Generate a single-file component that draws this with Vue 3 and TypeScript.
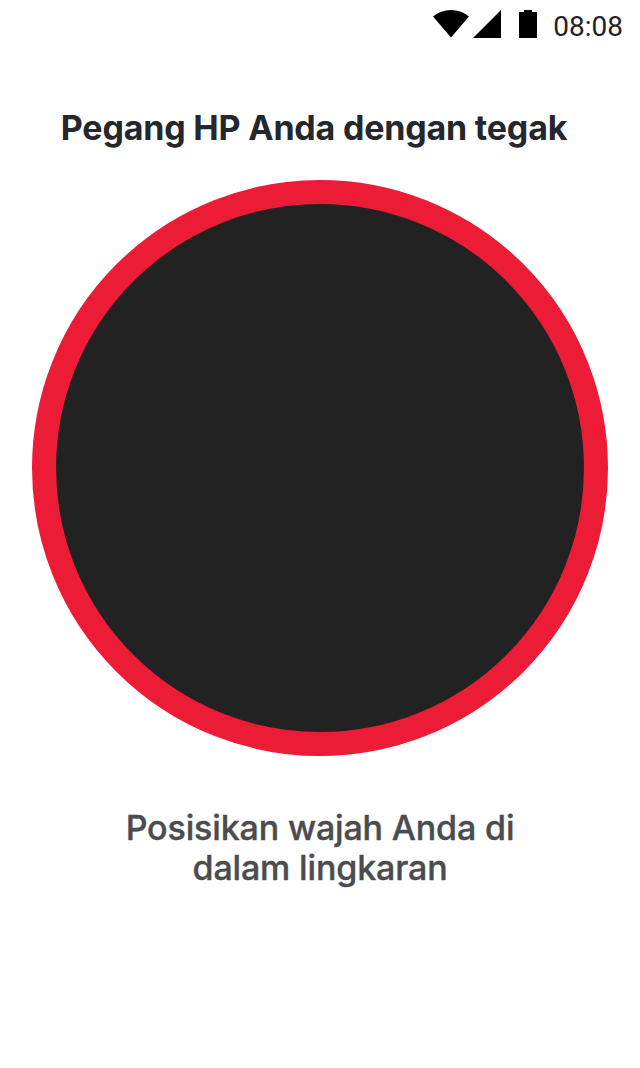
<script setup lang="ts">
const title: string = 'Pegang HP Anda dengan tegak'
</script>

<template>
  <div class="screen">
    <div class="status">
      <svg class="wifi" width="36" height="28" viewBox="0 0 36 28"><path d="M0 6.5C5 2.2 11 0 18 0s13 2.2 18 6.5L18 27.5z" fill="#000"/></svg>
      <svg class="signal" width="28" height="28" viewBox="0 0 28 28"><path d="M28 0v28H0z" fill="#000"/></svg>
      <svg class="battery" width="18" height="28" viewBox="0 0 18 28"><path d="M5 0h8v2H18V28H0V2h5z" fill="#000"/></svg>
      <span class="time">08:08</span>
    </div>
    <h1 class="title">{{ title }}</h1>
    <div class="ring"></div>
    <p class="hint">Posisikan wajah Anda di<br />dalam lingkaran</p>
  </div>
</template>

<style scoped>
.screen { width: 640px; height: 1068px; background: #fff; display: flex; flex-direction: column; align-items: center; overflow: hidden; font-family: "Inter", "Noto Sans", sans-serif; }
.status { width: 100%; box-sizing: border-box; height: 48px; display: flex; align-items: center; justify-content: flex-end; padding-right: 17px; }
.wifi { margin-right: 4px; }
.signal { margin-right: 18px; }
.battery { margin-right: 16px; }
.time { font-family: "Roboto", sans-serif; font-size: 28px; color: #222; margin-top: 4px; }
.title { margin: 60px 12px 0 0; font-size: 34px; line-height: 40px; font-weight: 700; color: #24272b; letter-spacing: -0.2px; white-space: nowrap; }
.ring { margin-top: 32px; width: 576px; height: 576px; box-sizing: border-box; border-radius: 50%; background: #222222; border: 24px solid #ed1c36; flex: none; }
.hint { margin: 52px 0 0; font-size: 34px; line-height: 40px; font-weight: 500; color: #4a4c4f; text-align: center; letter-spacing: -0.15px; -webkit-text-stroke: 0.4px #4a4c4f; }
</style>

<style>
html, body { margin: 0; background: #fff; }
</style>
